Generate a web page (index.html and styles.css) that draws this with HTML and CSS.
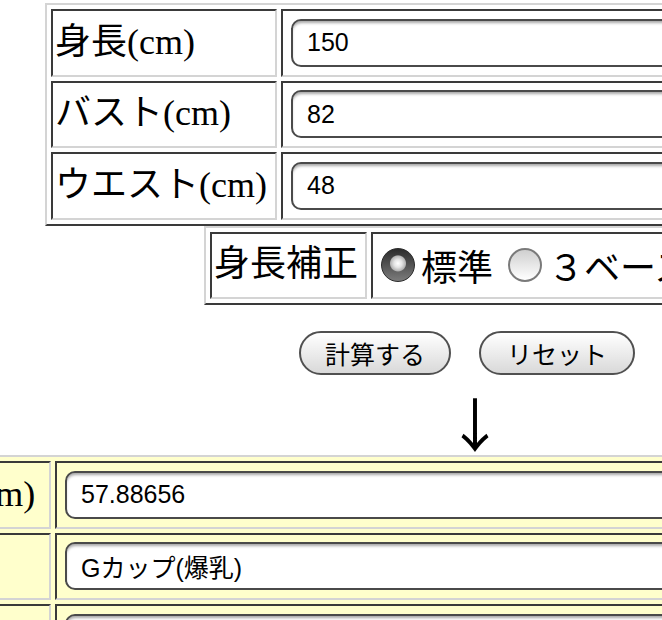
FILE: index.html
```html
<!DOCTYPE html>
<html lang="ja">
<head>
<meta charset="utf-8">
<title>バストサイズ計算</title>
<link rel="stylesheet" href="styles.css">
</head>
<body>
<div class="page">
  <table class="grid form-table">
    <tr>
      <td class="label">身長(cm)</td>
      <td class="field"><input class="text-input" type="text" value="150"></td>
    </tr>
    <tr>
      <td class="label">バスト(cm)</td>
      <td class="field"><input class="text-input" type="text" value="82"></td>
    </tr>
    <tr>
      <td class="label">ウエスト(cm)</td>
      <td class="field"><input class="text-input" type="text" value="48"></td>
    </tr>
  </table>

  <table class="grid option-table">
    <tr>
      <td class="label opt-label">身長補正</td>
      <td class="options"><label class="opt"><input class="radio" type="radio" name="hosei" checked>標準</label> <label class="opt"><input class="radio" type="radio" name="hosei">３ベース</label></td>
    </tr>
  </table>

  <div class="buttons">
    <button class="btn" type="button">計算する</button>
    <button class="btn btn-reset" type="button">リセット</button>
  </div>

  <div class="arrow">↓</div>

  <table class="grid result-table">
    <tr>
      <td class="label res-label">アンダーバスト(cm)</td>
      <td class="field"><input class="text-input" type="text" value="57.88656"></td>
    </tr>
    <tr>
      <td class="label res-label">カップ</td>
      <td class="field"><input class="text-input" type="text" value="Gカップ(爆乳)"></td>
    </tr>
    <tr>
      <td class="label res-label">判定</td>
      <td class="field"><input class="text-input" type="text" value=""></td>
    </tr>
  </table>
</div>
</body>
</html>
```

FILE: styles.css
```css
* {
  box-sizing: border-box;
}

html,
body {
  margin: 0;
  padding: 0;
  background: #ffffff;
}

.page {
  width: 662px;
  height: 620px;
  overflow: hidden;
  font-family: "Liberation Serif", "Noto Sans CJK JP", serif;
  font-size: 36px;
  color: #000000;
}

.grid {
  border-collapse: separate;
  border-spacing: 4px;
  border-style: solid;
  border-width: 2px;
  border-color: #d4d4d4 #3a3a3a #3a3a3a #d4d4d4;
}

.grid td {
  border-style: solid;
  border-width: 2px;
  border-color: #3a3a3a #d4d4d4 #d4d4d4 #3a3a3a;
  padding: 2px;
  height: 67.5px;
  white-space: nowrap;
  vertical-align: middle;
}

.label {
  text-align: left;
  line-height: 1.1;
}

.form-table {
  width: 1000px;
  margin: 3px 0 0 45px;
}

.form-table .label {
  width: 226px;
}

.text-input {
  display: block;
  width: calc(100% - 6px);
  height: 48px;
  margin: 0 0 0 6px;
  padding: 0 14px;
  border: 2px solid #4a4a4a;
  border-radius: 10px;
  background: #ffffff;
  box-shadow: inset 0 3px 3px -1px rgba(0, 0, 0, 0.35);
  font: 25px "Liberation Sans", "Noto Sans CJK JP", sans-serif;
  color: #000000;
  outline: none;
}

.option-table {
  width: 720px;
  margin: 0 0 0 204px;
}

.opt-label {
  width: 157px;
}

.opt {
  display: inline-flex;
  align-items: center;
}

.radio {
  appearance: none;
  -webkit-appearance: none;
  width: 34px;
  height: 34px;
  margin: 0 6px 0 6px;
  border-radius: 50%;
  border: 2px solid #7a7a7a;
  background: linear-gradient(#cfcfcf, #ffffff);
  flex: none;
}

.radio:checked {
  border: 1px solid #2a2a2a;
  background:
    radial-gradient(circle at 50% 45%, #ffffff 0, #e4e4e4 4px, #b4b4b4 7.5px, rgba(180, 180, 180, 0) 8.5px),
    linear-gradient(#2c2c2c, #7c7c7c);
}

.buttons {
  display: flex;
  gap: 28px;
  margin-top: 26px;
  padding-left: 299px;
}

.btn {
  height: 44px;
  padding: 0 24px;
  border: 2px solid #505050;
  border-radius: 22px;
  background: linear-gradient(#ffffff, #d9d9d9);
  font: 25px/1 "Noto Sans CJK JP", sans-serif;
  color: #000000;
}

.btn-reset {
  padding: 0 26px;
}

.arrow {
  height: 80px;
  padding: 7px 0 0 446px;
  font: 58px/80px "Noto Sans CJK JP", sans-serif;
}

.result-table {
  width: 1200px;
  margin: 0 0 0 -293px;
  background: #ffffcc;
}

.res-label {
  width: 338px;
}
```
